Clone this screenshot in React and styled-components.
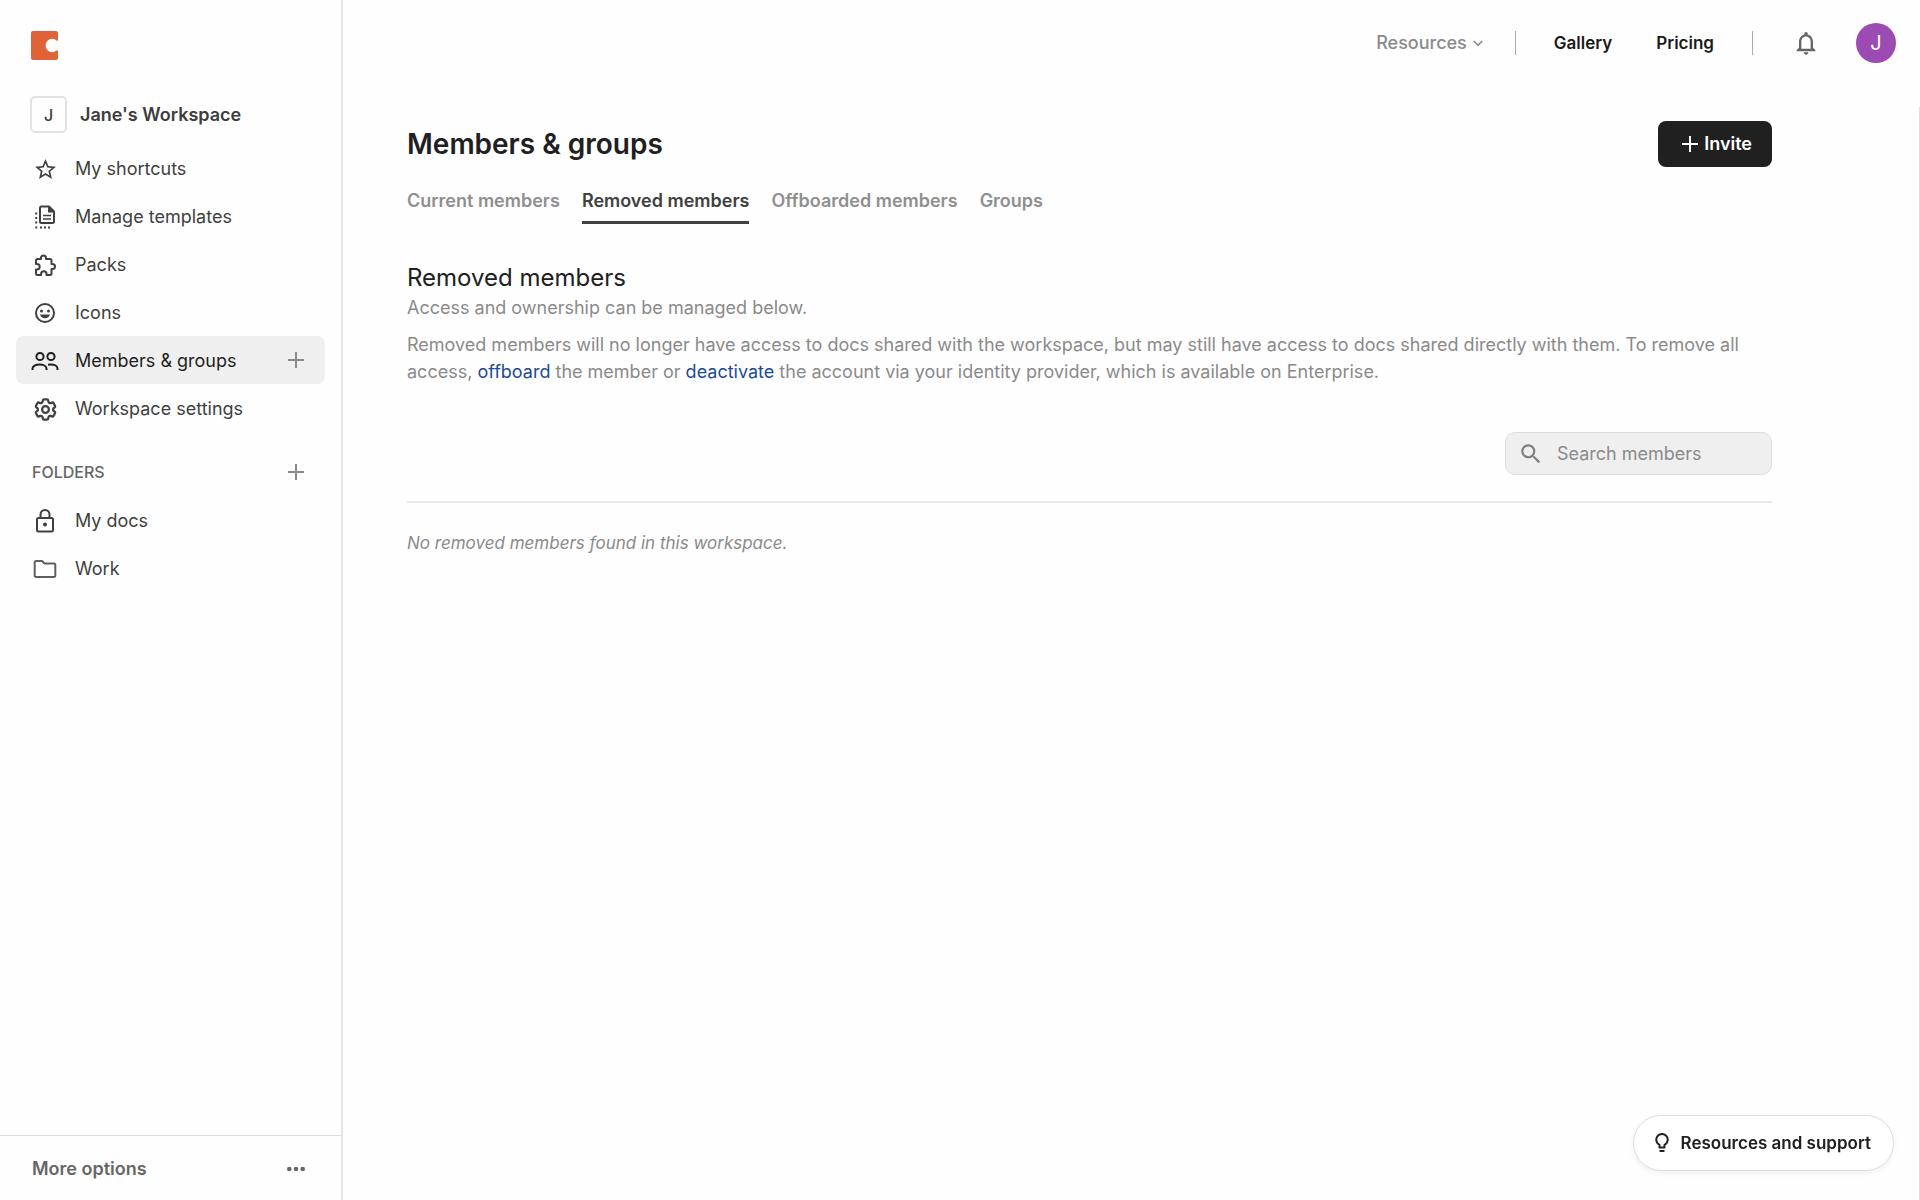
import React, { useState } from "react";
import styled, { createGlobalStyle, css } from "styled-components";
import { MdStarBorder, MdSearch, MdNotificationsNone } from "react-icons/md";
import { HiOutlineCog6Tooth } from "react-icons/hi2";

const GlobalStyle = createGlobalStyle`
  * {
    box-sizing: border-box;
  }
  body {
    margin: 0;
    background: #fefefe;
    color: #3d3d3d;
    font-family: "Inter", "Liberation Sans", sans-serif;
    font-size: 18px;
    line-height: 24px;
  }
  button,
  input {
    font: inherit;
    color: inherit;
  }
`;

const LogoIcon = () => (
  <svg width="27" height="29" viewBox="0 0 27 29" aria-hidden="true">
    <path
      fill="#de6337"
      d="M2 0h23a2 2 0 0 1 2 2v7.2c0 .6-.5.8-1 .5A6.7 6.7 0 0 0 21.300 7.800a6.700 6.700 0 1 0 0 13.400c1.900 0 3.600-.8 4.700-1.900.5-.3 1-.1 1 .5V27a2 2 0 0 1-2 2H2a2 2 0 0 1-2-2V2a2 2 0 0 1 2-2z"
    />
  </svg>
);

const TemplatesIcon = () => (
  <svg width="22" height="24" viewBox="0 0 22 24" fill="none" aria-hidden="true">
    <path
      d="M7.500 1.500h7.500l5 5v10a1.500 1.500 0 0 1-1.500 1.500h-11A1.500 1.500 0 0 1 6 16.500V3a1.500 1.500 0 0 1 1.500-1.500z"
      stroke="currentColor"
      strokeWidth="2"
      strokeLinejoin="round"
    />
    <path d="M14 1l6.500 6.500H14z" fill="currentColor" />
    <path d="M9 10.500h8M9 14h8" stroke="currentColor" strokeWidth="1.600" />
    <path
      d="M1.200 8.500h2M1.200 13h2M1.200 17.500h2M1.200 22.500h2M6 22.500h2M10 22.500h2M14 22.500h2"
      stroke="currentColor"
      strokeWidth="2"
    />
  </svg>
);

const PuzzleIcon = () => (
  <svg width="23" height="23" viewBox="0 0 23 23" fill="none" stroke="currentColor" strokeWidth="2" strokeLinejoin="round" aria-hidden="true">
    <path d="M7 5V4a2.500 2.500 0 0 1 5 0v1h4a1.500 1.500 0 0 1 1.500 1.500V10h1a2.500 2.500 0 0 1 0 5h-1v4.500A1.500 1.500 0 0 1 16 21h-3.500v-1a2.700 2.700 0 0 0-5.400 0v1H3.500A1.500 1.500 0 0 1 2 19.500v-4h1a2.700 2.700 0 0 0 0-5.400H2V6.500A1.500 1.500 0 0 1 3.500 5z" />
  </svg>
);

const SmileIcon = () => (
  <svg width="22" height="22" viewBox="0 0 22 22" fill="none" aria-hidden="true">
    <circle cx="11" cy="11" r="9" stroke="currentColor" strokeWidth="2" />
    <circle cx="7.500" cy="9" r="1.500" fill="currentColor" />
    <circle cx="14.500" cy="9" r="1.500" fill="currentColor" />
    <path d="M6 12.500h10c-.6 2.400-2.500 3.800-5 3.800s-4.400-1.400-5-3.800z" fill="currentColor" />
  </svg>
);

const MembersIcon = () => (
  <svg width="28" height="20" viewBox="0 0 28 20" fill="none" stroke="currentColor" strokeWidth="2" aria-hidden="true">
    <circle cx="9" cy="5.500" r="3.600" />
    <circle cx="20" cy="5.500" r="3.600" />
    <path d="M1.500 19v-1.200c0-2.600 3.300-4.300 7-4.300s7 1.700 7 4.300V19" />
    <path d="M17 13.800c.9-.2 1.900-.3 2.900-.3 3.600 0 6.600 1.700 6.600 4.300V19" />
  </svg>
);

const LockIcon = () => (
  <svg width="20" height="24" viewBox="0 0 20 24" fill="none" stroke="currentColor" strokeWidth="2" aria-hidden="true">
    <rect x="2" y="9" width="16" height="13.500" rx="1.500" />
    <path d="M5.500 9V5.500a4.500 4.500 0 0 1 9 0V9" />
    <circle cx="10" cy="15.600" r="2" fill="currentColor" stroke="none" />
  </svg>
);

const FolderIcon = () => (
  <svg width="24" height="20" viewBox="0 0 24 20" fill="none" stroke="#5f5f5f" strokeWidth="2" strokeLinejoin="round" aria-hidden="true">
    <path d="M3 2h6l2.500 2.500H21A1.300 1.300 0 0 1 22.300 5.800v11A1.300 1.300 0 0 1 21 18H3a1.300 1.300 0 0 1-1.300-1.300V3.300A1.300 1.300 0 0 1 3 2z" />
  </svg>
);

const PlusIcon = () => (
  <svg width="16" height="16" viewBox="0 0 16 16" stroke="currentColor" strokeWidth="2" aria-hidden="true">
    <path d="M8 0v16M0 8h16" />
  </svg>
);

const DotsIcon = () => (
  <svg width="18" height="6" viewBox="0 0 18 6" fill="currentColor" aria-hidden="true">
    <circle cx="2.300" cy="3" r="2.300" />
    <circle cx="9" cy="3" r="2.300" />
    <circle cx="15.700" cy="3" r="2.300" />
  </svg>
);

const ChevronIcon = () => (
  <svg width="10" height="7" viewBox="0 0 10 7" fill="none" stroke="currentColor" strokeWidth="1.600" aria-hidden="true">
    <path d="M.8 1l4.200 4.300L9.200 1" />
  </svg>
);

const BulbIcon = () => (
  <svg width="14" height="20" viewBox="0 0 14 20" fill="none" stroke="currentColor" strokeWidth="2" aria-hidden="true">
    <path d="M4.500 14.500v-2.700a5.700 5.700 0 1 1 5 0v2.700z" strokeLinejoin="round" />
    <path d="M4.500 18h5" />
  </svg>
);

const navItems = [
  { label: "My shortcuts", icon: <MdStarBorder size={25} /> },
  { label: "Manage templates", icon: <TemplatesIcon /> },
  { label: "Packs", icon: <PuzzleIcon /> },
  { label: "Icons", icon: <SmileIcon /> },
  { label: "Members & groups", icon: <MembersIcon />, canAdd: true },
  { label: "Workspace settings", icon: <HiOutlineCog6Tooth size={27} strokeWidth={2} /> },
];

const folders = [
  { label: "My docs", icon: <LockIcon /> },
  { label: "Work", icon: <FolderIcon /> },
];

const tabs = ["Current members", "Removed members", "Offboarded members", "Groups"];

export default function App() {
  const [currentPage, setCurrentPage] = useState("Members & groups");
  const [currentTab, setCurrentTab] = useState("Removed members");
  const [search, setSearch] = useState("");

  return (
    <>
      <GlobalStyle />
      <Layout>
        <Sidebar>
          <LogoLink href="#" aria-label="Home">
            <LogoIcon />
          </LogoLink>
          <Workspace>
            <WorkspaceBadge>J</WorkspaceBadge>
            Jane's Workspace
          </Workspace>
          <nav>
            {navItems.map((item) => (
              <NavRow key={item.label} $active={item.label === currentPage}>
                <NavLink href="#" onClick={() => setCurrentPage(item.label)}>
                  <NavIcon>{item.icon}</NavIcon>
                  {item.label}
                </NavLink>
                {item.canAdd && (
                  <IconButton aria-label="Add members">
                    <PlusIcon />
                  </IconButton>
                )}
              </NavRow>
            ))}
          </nav>
          <FoldersHeader>
            <h2>FOLDERS</h2>
            <IconButton aria-label="Add folder">
              <PlusIcon />
            </IconButton>
          </FoldersHeader>
          {folders.map((folder) => (
            <NavRow key={folder.label}>
              <NavLink href="#">
                <NavIcon>{folder.icon}</NavIcon>
                {folder.label}
              </NavLink>
            </NavRow>
          ))}
          <MoreOptions>
            More options
            <DotsIcon />
          </MoreOptions>
        </Sidebar>

        <Main>
          <TopBar>
            <ResourcesButton>
              Resources
              <ChevronIcon />
            </ResourcesButton>
            <TopLinks>
              <a href="#">Gallery</a>
              <a href="#">Pricing</a>
            </TopLinks>
            <BellButton aria-label="Notifications">
              <MdNotificationsNone size={28} />
            </BellButton>
            <Avatar aria-label="Account">J</Avatar>
          </TopBar>

          <Content>
            <TitleRow>
              <h1>Members &amp; groups</h1>
              <InviteButton>
                <PlusIcon />
                Invite
              </InviteButton>
            </TitleRow>
            <Tabs role="tablist">
              {tabs.map((tab) => (
                <Tab
                  key={tab}
                  role="tab"
                  aria-selected={tab === currentTab}
                  $active={tab === currentTab}
                  onClick={() => setCurrentTab(tab)}
                >
                  {tab}
                </Tab>
              ))}
            </Tabs>
            <SectionTitle>Removed members</SectionTitle>
            <Description>Access and ownership can be managed below.</Description>
            <Description>
              Removed members will no longer have access to docs shared with the workspace, but may
              still have access to docs shared directly with them. To remove all access,{" "}
              <a href="#">offboard</a> the member or <a href="#">deactivate</a> the account via your
              identity provider, which is available on Enterprise.
            </Description>
            <SearchBox>
              <MdSearch size={26} />
              <input
                type="text"
                aria-label="Search members"
                placeholder="Search members"
                value={search}
                onChange={(e) => setSearch(e.target.value)}
              />
            </SearchBox>
            <EmptyMessage>No removed members found in this workspace.</EmptyMessage>
          </Content>
        </Main>
      </Layout>
      <SupportButton>
        <BulbIcon />
        Resources and support
      </SupportButton>
    </>
  );
}

const resetButton = css`
  border: none;
  background: none;
  padding: 0;
  cursor: pointer;
`;

const Layout = styled.div`
  display: flex;
  min-height: 100vh;
`;

const Sidebar = styled.aside`
  display: flex;
  flex-direction: column;
  flex: 0 0 343px;
  border-right: 2px solid #e5e5e5;
`;

const LogoLink = styled.a`
  display: flex;
  margin: 31px 31px 36px;
`;

const Workspace = styled.div`
  display: flex;
  align-items: center;
  gap: 13px;
  padding: 0 30px;
  margin-bottom: 11px;
  font-weight: 600;
`;

const WorkspaceBadge = styled.span`
  display: flex;
  align-items: center;
  justify-content: center;
  width: 37px;
  height: 37px;
  border: 2px solid #e2e2e2;
  border-radius: 5px;
  font-size: 16px;
  font-weight: 500;
`;

const NavRow = styled.div`
  display: flex;
  align-items: center;
  height: 48px;
  margin: 0 16px;
  padding-right: 16px;
  border-radius: 8px;
  background: ${({ $active }) => ($active ? "#efefef" : "transparent")};
  color: ${({ $active }) => ($active ? "#1f1f1f" : "#404040")};
`;

const NavLink = styled.a`
  display: flex;
  flex: 1;
  align-items: center;
  gap: 15px;
  padding: 2px 0 0 14px;
  color: inherit;
  text-decoration: none;
`;

const NavIcon = styled.span`
  display: flex;
  align-items: center;
  justify-content: center;
  width: 30px;
  height: 30px;
`;

const IconButton = styled.button`
  ${resetButton}
  display: flex;
  align-items: center;
  justify-content: center;
  width: 26px;
  height: 26px;
  color: #8a8a8a;
`;

const FoldersHeader = styled.div`
  display: flex;
  align-items: center;
  justify-content: space-between;
  height: 48px;
  margin-top: 16px;
  padding: 0 32px;
  h2 {
    margin: 0;
    color: #666666;
    font-size: 16px;
    font-weight: 500;
  }
`;

const MoreOptions = styled.button`
  ${resetButton}
  display: flex;
  align-items: center;
  justify-content: space-between;
  height: 65px;
  margin-top: auto;
  padding: 2px 36px 0 32px;
  border-top: 1px solid #dcdcdc;
  color: #666666;
  font-weight: 600;
`;

const Main = styled.main`
  flex: 1;
  display: flex;
  flex-direction: column;
  min-width: 0;
`;

const TopBar = styled.header`
  display: flex;
  align-items: center;
  justify-content: flex-end;
  height: 107px;
  padding: 0 24px 21px 0;
`;

const ResourcesButton = styled.button`
  ${resetButton}
  display: flex;
  align-items: center;
  gap: 6px;
  padding-right: 32px;
  color: #8a8a8a;
  font-weight: 500;
`;

const TopLinks = styled.nav`
  display: flex;
  gap: 44px;
  padding: 0 38px;
  border: solid #a8a8a8;
  border-width: 0 1px;
  a {
    color: #1a1a1a;
    font-size: 17px;
    font-weight: 600;
    text-decoration: none;
  }
`;

const BellButton = styled.button`
  ${resetButton}
  display: flex;
  margin: 0 36px 0 39px;
  color: #666666;
`;

const Avatar = styled.button`
  ${resetButton}
  width: 40px;
  height: 40px;
  border-radius: 50%;
  background: #9c4bb3;
  color: #ffffff;
  font-size: 20px;
`;

const Content = styled.section`
  flex: 1;
  padding: 14px 147px 0 64px;
  border-right: 1px solid #dedede;
`;

const TitleRow = styled.div`
  display: flex;
  align-items: center;
  justify-content: space-between;
  h1 {
    margin: 0;
    color: #202020;
    font-size: 28px;
    font-weight: 600;
    line-height: 36px;
  }
`;

const InviteButton = styled.button`
  ${resetButton}
  display: flex;
  align-items: center;
  gap: 6px;
  height: 46px;
  padding: 0 20px 0 24px;
  border-radius: 8px;
  background: #202020;
  color: #ffffff;
  font-weight: 600;
`;

const Tabs = styled.div`
  display: flex;
  gap: 22px;
  margin-top: 18px;
`;

const Tab = styled.button`
  ${resetButton}
  height: 39px;
  padding-bottom: 4px;
  border-bottom: 3px solid ${({ $active }) => ($active ? "#404040" : "transparent")};
  color: ${({ $active }) => ($active ? "#404040" : "#8f8f8f")};
  font-weight: 600;
`;

const SectionTitle = styled.h2`
  margin: 38px 0 0;
  color: #202020;
  font-size: 24px;
  font-weight: 400;
  line-height: 32px;
`;

const Description = styled.p`
  margin: 0 0 10px;
  color: #8a8a8a;
  line-height: 27px;
  a {
    color: #1d4a94;
    text-decoration: none;
  }
`;

const SearchBox = styled.label`
  display: flex;
  align-items: center;
  gap: 13px;
  width: 267px;
  height: 43px;
  margin: 47px 0 26px auto;
  padding: 0 12px;
  border: 1px solid #dedede;
  border-radius: 10px;
  background: #efefef;
  color: #808080;
  svg {
    flex: none;
  }
  input {
    width: 100%;
    padding: 0;
    border: none;
    outline: none;
    background: none;
  }
  input::placeholder {
    color: #8a8a8a;
    opacity: 1;
  }
`;

const EmptyMessage = styled.p`
  margin: 0;
  padding-top: 28px;
  border-top: 2px solid #e8e8e8;
  color: #8a8a8a;
  font-size: 17px;
  font-style: italic;
`;

const SupportButton = styled.button`
  ${resetButton}
  position: fixed;
  right: 26px;
  bottom: 29px;
  display: flex;
  align-items: center;
  gap: 12px;
  height: 56px;
  padding: 0 22px 0 21px;
  border: 1px solid #dcdcdc;
  border-radius: 28px;
  background: #ffffff;
  box-shadow: 0 2px 6px rgba(0, 0, 0, 0.06);
  color: #202020;
  font-size: 17px;
  font-weight: 600;
`;
